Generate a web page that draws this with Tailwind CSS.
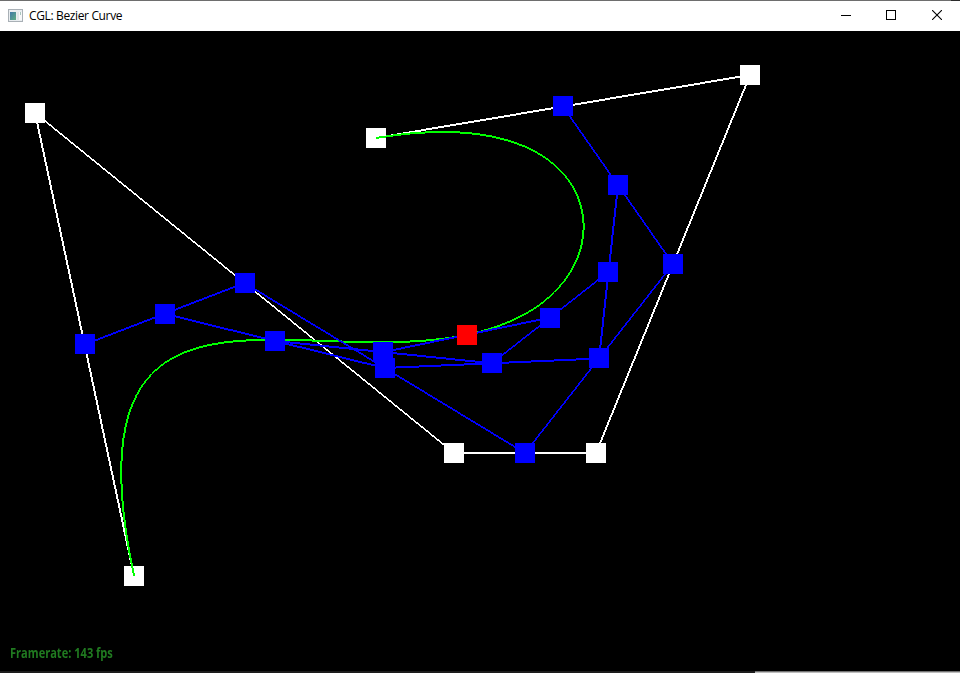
<!DOCTYPE html>
<html lang="en">
<head>
<meta charset="utf-8">
<title>CGL: Bezier Curve</title>
<script src="https://cdn.jsdelivr.net/npm/@tailwindcss/browser@4"></script>
</head>
<body class="w-[960px] h-[673px] overflow-hidden bg-black flex flex-col">
<div class="flex h-px shrink-0"><div class="grow bg-[#6e6e6e]"></div><div class="w-[9px] bg-[#2b2b2b]"></div></div>
<header class="flex h-[30px] shrink-0 items-center bg-white pl-2">
  <svg class="shrink-0 -mt-0.5" width="15" height="13" viewBox="0 0 15 13" shape-rendering="crispEdges">
    <defs><linearGradient id="g" x1="0" y1="0" x2="1" y2="1"><stop offset="0" stop-color="#3f78a8"/><stop offset="1" stop-color="#5fae83"/></linearGradient></defs>
    <rect width="15" height="13" fill="#a9b0b6"/>
    <rect x="1" y="1" width="13" height="11" fill="#e9edf0"/>
    <rect x="2" y="3" width="6" height="8" fill="url(#g)"/>
    <rect x="9" y="3" width="2" height="8" fill="#dfe6e8"/>
    <rect x="11" y="3" width="3" height="8" fill="#f7f8f9"/>
    <rect x="12" y="3" width="1" height="3" fill="#a9c5bd"/>
  </svg>
  <h1 class="ml-1.5 w-[94px] whitespace-nowrap text-[12px] leading-4 tracking-[-0.36px] text-black font-['Open_Sans','Noto_Sans',sans-serif]">CGL: Bezier Curve</h1>
  <div class="ml-auto flex h-full pb-0.5">
    <button class="grid w-[45px] place-items-center pl-px" aria-label="Minimize"><svg width="10" height="10" shape-rendering="crispEdges"><path d="M0 5h10v1H0z"/></svg></button>
    <button class="grid w-[46px] place-items-center" aria-label="Maximize"><svg width="10" height="10" shape-rendering="crispEdges"><path d="M.5.5h9v9h-9z" fill="none" stroke="#000"/></svg></button>
    <button class="grid w-[46px] place-items-center" aria-label="Close"><svg width="10" height="10"><path d="M0 0l10 10M10 0L0 10" fill="none" stroke="#000" stroke-width="1.1"/></svg></button>
  </div>
</header>
<main class="relative h-[640px] shrink-0 bg-black">
  <canvas id="scene" class="block" width="960" height="640"></canvas>
  <p id="fps" class="absolute left-[10px] top-[613px] origin-left scale-x-[0.79] whitespace-nowrap text-[14px] leading-[18px] font-bold text-[#207a20] font-['Open_Sans','Noto_Sans',sans-serif]">Framerate: 143 fps</p>
</main>
<footer class="flex h-[2px] shrink-0"><div class="w-[755px] bg-[#1c1c1c]"></div><div class="grow border-t border-[#737373] bg-[#bdbdbd]"></div></footer>
<script>
const ctx = document.getElementById('scene').getContext('2d');
const TOP = 31;
const control = [[134,576],[35.1,113],[454,453],[596,453],[750,75],[376,138]];

// Aliased two-pixel line: the minor axis is doubled at every step.
function line([x0, y0], [x1, y1]) {
  const dx = x1 - x0, dy = y1 - y0;
  if (Math.abs(dx) >= Math.abs(dy)) {
    if (dx < 0) return line([x1, y1], [x0, y0]);
    for (let x = Math.round(x0); x < Math.round(x1); x++) {
      const y = y0 + (x + 0.5 - x0) * dy / dx;
      ctx.fillRect(x, Math.floor(y - 0.5) - TOP, 1, 2);
    }
  } else {
    if (dy < 0) return line([x1, y1], [x0, y0]);
    for (let y = Math.round(y0); y < Math.round(y1); y++) {
      const x = x0 + (y + 0.5 - y0) * dx / dy;
      ctx.fillRect(Math.floor(x - 0.5), y - TOP, 2, 1);
    }
  }
}
function marker([x, y]) { ctx.fillRect(Math.ceil(x - 0.53) - 10, Math.ceil(y - 0.5) - 10 - TOP, 20, 20); }
function reduce(pts, t) {
  return pts.slice(1).map((p, i) => [pts[i][0] * (1 - t) + p[0] * t, pts[i][1] * (1 - t) + p[1] * t]);
}
function drawLines(pts) { for (let i = 1; i < pts.length; i++) line(pts[i - 1], pts[i]); }
function at(t) { let p = control; while (p.length > 1) p = reduce(p, t); return p[0]; }

ctx.fillStyle = '#fff';
drawLines(control);
control.forEach(marker);

ctx.fillStyle = '#0f0';
drawLines(Array.from({length: 101}, (_, i) => at(i / 100)));

ctx.fillStyle = '#00f';
let level = reduce(control, 0.5);
while (level.length > 1) {
  drawLines(level);
  level.forEach(marker);
  level = reduce(level, 0.5);
}
ctx.fillStyle = '#f00';
level.forEach(marker);
</script>
</body>
</html>
